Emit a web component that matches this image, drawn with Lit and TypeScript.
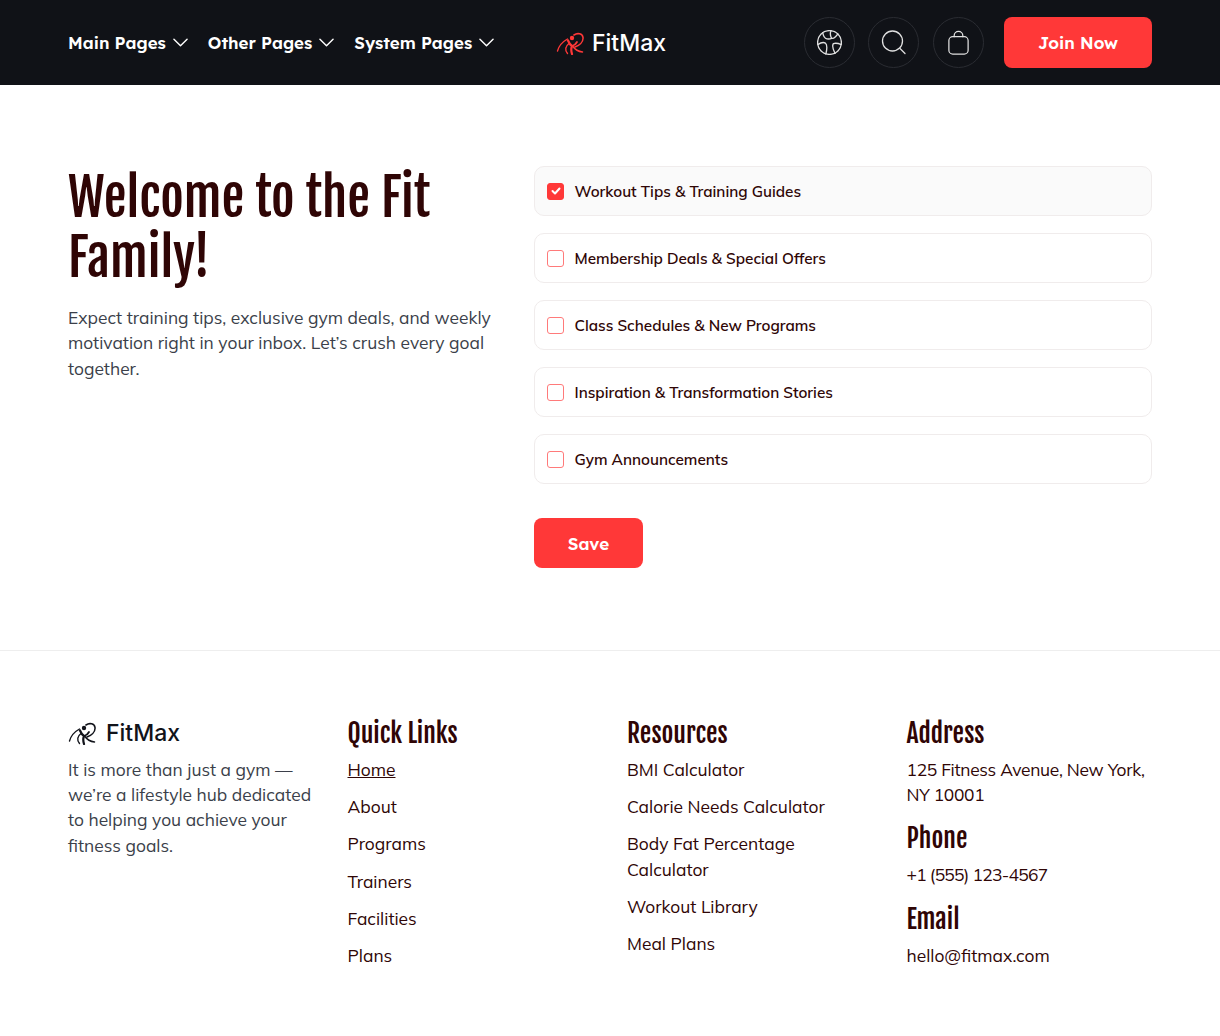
import { LitElement, html, css, svg } from "lit";
import { customElement } from "lit/decorators.js";

const logo = (c: string) => html`<svg class="logo-mark" viewBox="4 4 28 24" fill="none" stroke=${c} stroke-linecap="round" stroke-linejoin="round">
  <path d="M15.500 12C11 14.500 7 18.500 5.500 24" stroke-width="1.400"/>
  <path d="M17 16.500C13.500 19 12.500 23 15.500 26.500" stroke-width="1.400"/>
  <circle cx="20" cy="11" r="2.200" fill=${c} stroke="none"/>
  <path d="M16 13.500C17 16 18.500 18 20 19C19 21.500 19 24 20 27" stroke-width="2.200"/>
  <path d="M20 19C22 18.500 24 17 25 15" stroke-width="1.800"/>
  <path d="M21 19.500C23 22.500 26 24.500 30.500 25" stroke-width="1.500"/>
  <path d="M22 8C25.500 5.500 30.500 6.500 31 10.500C31.500 15 27 18.500 23 20" stroke-width="1.600"/>
</svg>`;

const chevron = html`<svg class="chev" viewBox="0 0 16 9" fill="none" stroke="currentColor" stroke-width="1.500" stroke-linecap="round" stroke-linejoin="round"><path d="M1 1l7 7 7-7"/></svg>`;

const globe = svg`<circle cx="12" cy="12" r="11.400"/><path d="M5.500 2.500C6 5.500 7 8 9.500 8.500C11.500 8.800 13 8.500 14 8C13 6 12 3.500 13.500 .7"/><path d="M14 8C16 8.500 18 7 20 3.800"/><path d="M.8 14C3 12.500 6 11.500 8 12.500C10 14 9.500 19 8.500 23.200"/><path d="M23.300 14C21 13 17.500 12.500 15.700 13C14.500 15 15.500 19 17.300 22.400"/>`;
const search = svg`<circle cx="11.500" cy="11" r="10"/><path d="M19 18.500L24 23.500"/>`;
const bag = svg`<rect x="2" y="7" width="20" height="18" rx="4"/><path d="M7.500 7V6a4.500 4.500 0 0 1 9 0v1"/>`;

@customElement("app-root")
export class AppRoot extends LitElement {
  static styles = css`
    :host { display: block; font-family: Mulish, sans-serif; color: #2f0606; background: #fff; font-size: 17.400px; }
    * { box-sizing: border-box; }
    a { color: inherit; text-decoration: none; }
    header { height: 85px; background: #101217; display: flex; align-items: center; padding: 0 68px; color: #fff; }
    .nav { display: flex; gap: 20px; width: 488px; font: 600 16.900px/1 Lexend, sans-serif; }
    .nav a { display: flex; align-items: center; gap: 7px; }
    .nav span { padding-top: 2px; }
    .chev { width: 15px; height: 9px; }
    .brand { display: flex; align-items: center; gap: 8px; font: 500 23px/1 Inter, sans-serif; }
    .brand span { padding-top: 2px; }
    .logo-mark { width: 28px; height: 24px; }
    .actions { margin-left: auto; display: flex; align-items: center; gap: 13.500px; }
    .circle { width: 51px; height: 51px; border: 1px solid #2a2c32; border-radius: 50%; display: grid; place-items: center; }
    .circle svg { width: 25px; height: 25px; fill: none; stroke: #e0e0e0; stroke-width: 1.300; stroke-linecap: round; stroke-linejoin: round; }
    .btn { background: #ff3838; color: #fff; border: 0; border-radius: 8px; height: 51px; display: inline-flex; align-items: center; justify-content: center; font: 600 17px/1 Lexend, sans-serif; }
    .join { width: 148px; margin-left: 7px; }
    .save { width: 109px; height: 50px; margin-top: 17px; }
    main { display: flex; padding: 81px 68px; border-bottom: 1px solid #eeeeee; height: 566px; }
    .intro { width: 466px; }
    .cond { font-family: "Fjalla One", sans-serif; font-weight: 400; color: #2f0505; margin: 0; }
    h1.cond { font-size: 51px; line-height: 60px; padding-top: 2px; }
    .intro p { margin: 17px 0 0; line-height: 25.400px; color: #3b3f4a; }
    .opts { flex: 1; display: flex; flex-direction: column; gap: 17px; }
    .opt { height: 50px; border: 1px solid #f0ecec; border-radius: 10px; display: flex; align-items: center; gap: 10.500px; padding: 0 12px; font-size: 15.300px; font-weight: 600; }
    .opt.on { background: #fafafa; }
    .box { width: 17px; height: 17px; border: 1px solid #ff7a7a; border-radius: 3px; display: grid; place-items: center; }
    .on .box { background: #ff3838; border-color: #ff3838; }
    .box svg { width: 10px; height: 8px; }
    footer { display: grid; grid-template-columns: repeat(4, 1fr); column-gap: 34px; padding: 65px 68px 0; height: 385px; line-height: 25.200px; }
    .f-brand { display: flex; align-items: center; gap: 10px; font: 500 23px/34px Inter, sans-serif; color: #11131a; height: 34px; }
    .about { margin: 7px 0 0; color: #3b3f4a; }
    h3.cond { font-size: 25.600px; line-height: 34px; }
    .links { display: flex; flex-direction: column; gap: 12px; margin-top: 7px; }
    .u { text-decoration: underline; }
    .block { margin-top: 7px; }
    .block + h3 { margin-top: 14px; }
    .addr { letter-spacing: -.3px; }
    .phone { letter-spacing: -.7px; }
  `;

  render() {
    const opts = ["Workout Tips & Training Guides", "Membership Deals & Special Offers", "Class Schedules & New Programs", "Inspiration & Transformation Stories", "Gym Announcements"];
    const quick = ["Home", "About", "Programs", "Trainers", "Facilities", "Plans"];
    const res = ["BMI Calculator", "Calorie Needs Calculator", "Body Fat Percentage Calculator", "Workout Library", "Meal Plans"];
    return html`
      <header>
        <nav class="nav">
          <a><span>Main Pages</span> ${chevron}</a><a><span>Other Pages</span> ${chevron}</a><a><span>System Pages</span> ${chevron}</a>
        </nav>
        <div class="brand">${logo("#ff3838")}<span>FitMax</span></div>
        <div class="actions">
          <div class="circle"><svg viewBox="0 0 24 24">${globe}</svg></div>
          <div class="circle"><svg viewBox="0 0 25 25">${search}</svg></div>
          <div class="circle"><svg viewBox="0 0 24 26">${bag}</svg></div>
          <a class="btn join">Join Now</a>
        </div>
      </header>
      <main>
        <section class="intro">
          <h1 class="cond">Welcome to the Fit Family!</h1>
          <p>Expect training tips, exclusive gym deals, and weekly motivation right in your inbox. Let’s crush every goal together.</p>
        </section>
        <section class="opts">
          ${opts.map((o, i) => html`<div class="opt ${i === 0 ? "on" : ""}"><span class="box">${i === 0 ? html`<svg viewBox="0 0 10 8" fill="none" stroke="#fff" stroke-width="2" stroke-linecap="round" stroke-linejoin="round"><path d="M1.500 4l2.500 2.500 4.500-5"/></svg>` : ""}</span>${o}</div>`)}
          <a class="btn save">Save</a>
        </section>
      </main>
      <footer>
        <div>
          <div class="f-brand">${logo("#11131a")}FitMax</div>
          <p class="about">It is more than just a gym — we’re a lifestyle hub dedicated to helping you achieve your fitness goals.</p>
        </div>
        <div>
          <h3 class="cond">Quick Links</h3>
          <div class="links">${quick.map((q, i) => html`<a class=${i === 0 ? "u" : ""}>${q}</a>`)}</div>
        </div>
        <div>
          <h3 class="cond">Resources</h3>
          <div class="links">${res.map((q) => html`<a>${q}</a>`)}</div>
        </div>
        <div>
          <h3 class="cond">Address</h3>
          <div class="block addr">125 Fitness Avenue, New York, NY 10001</div>
          <h3 class="cond">Phone</h3>
          <div class="block phone">+1 (555) 123-4567</div>
          <h3 class="cond">Email</h3>
          <div class="block">hello@fitmax.com</div>
        </div>
      </footer>
    `;
  }
}
